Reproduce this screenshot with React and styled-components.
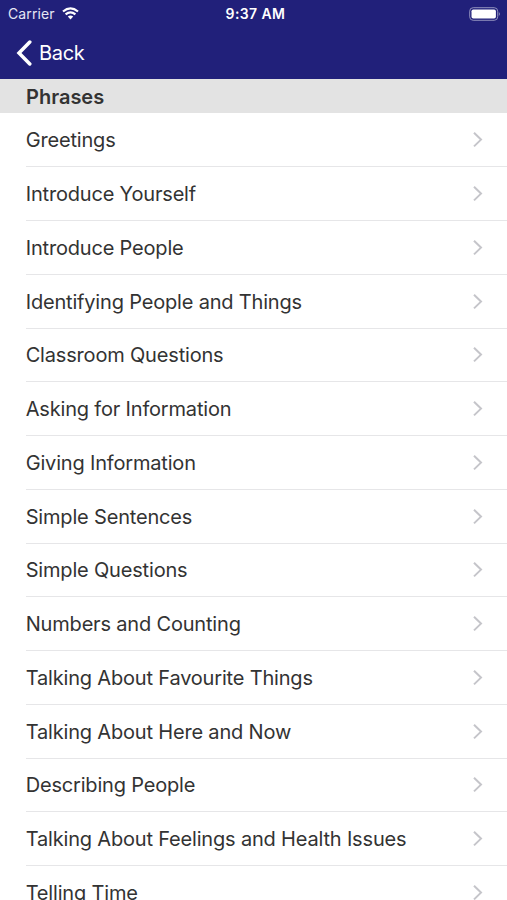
import React from 'react';
import styled, { createGlobalStyle } from 'styled-components';

const GlobalStyle = createGlobalStyle`
  * { box-sizing: border-box; }
  body { margin: 0; background: #fff; overflow: hidden; font-family: Inter, "Liberation Sans", sans-serif; }
`;
const Screen = styled.main`
  width: 100%;
  height: 900px;
  overflow: hidden;
  background: #fff;
`;
const Header = styled.header`
  height: 79px;
  background: #21207a;
  color: #fff;
`;
const StatusBar = styled.div`
  display: grid;
  grid-template-columns: 1fr auto 1fr;
  align-items: center;
  height: 27px;
  padding: 0 6px 0 8px;
  font-size: 14px;
  line-height: 27px;
`;
const Carrier = styled.div`
  display: flex;
  align-items: center;
  gap: 7px;
  color: #e6e6f4;
`;
const Label = styled.span`
  display: block;
  white-space: nowrap;
  letter-spacing: ${(p) => p.$track || 0}px;
  font-weight: ${(p) => p.$weight || 400};
`;
const Clock = styled(Label)`
  padding-left: 2px;
`;
const Battery = styled.svg`
  justify-self: end;
`;
const BackButton = styled.button`
  display: flex;
  align-items: center;
  gap: 6px;
  height: 52px;
  margin: 0;
  padding: 0 0 0 16px;
  border: 0;
  background: none;
  color: inherit;
  font: 400 20px/52px Inter, sans-serif;
`;
const SectionTitle = styled.h2`
  height: 34px;
  margin: 0;
  padding-left: 26px;
  background: #e3e3e3;
  color: #333;
  font-size: 20px;
  font-weight: 600;
  line-height: 36px;
`;
const List = styled.ul`
  margin: 0;
  padding: 0.5px 0 0 25.7px;
  list-style: none;
`;
const Row = styled.li`
  display: flex;
  align-items: center;
  justify-content: space-between;
  height: 53.75px;
  padding: 1px 24px 0 0;
  border-bottom: 1px solid #e6e6e8;
  color: #333;
  font-size: 20px;
`;

const phrases = [
  'Greetings', 'Introduce Yourself', 'Introduce People',
  'Identifying People and Things', 'Classroom Questions',
  'Asking for Information', 'Giving Information', 'Simple Sentences',
  'Simple Questions', 'Numbers and Counting',
  'Talking About Favourite Things', 'Talking About Here and Now',
  'Describing People', 'Talking About Feelings and Health Issues',
  'Telling Time',
];

export default function App() {
  return (
    <Screen>
      <GlobalStyle />
      <Header>
        <StatusBar>
          <Carrier>
            <Label $track={0.1}>Carrier</Label>
            <svg width="17" height="13" viewBox="0 0 17 13" fill="none" stroke="#fff" strokeWidth="2.2">
              <path d="M1 4.5Q8.5-1.8 16 4.5M3.6 7.4Q8.5 3.3 13.4 7.4" />
              <path d="M5.8 9.5Q8.5 7.4 11.2 9.5L8.5 12.4Z" fill="#fff" stroke="none" />
            </svg>
          </Carrier>
          <Clock $weight={600} $track={0.4}>9:37 AM</Clock>
          <Battery width="32" height="14" viewBox="0 0 32 14">
            <rect x="0.7" y="0.7" width="28" height="12.6" rx="3.5" fill="none" stroke="#9090bd" />
            <rect x="2.5" y="2.5" width="24.4" height="9" rx="1.8" fill="#fff" />
            <path d="M29.8 5Q32 7 29.8 9Z" fill="#9090bd" />
          </Battery>
        </StatusBar>
        <BackButton>
          <svg width="17" height="27" viewBox="0 0 17 27" fill="none" stroke="#fff" strokeWidth="3.5" strokeLinecap="round"><path d="M13.8 2L3 13L13.8 24" /></svg>
          <Label $track={-0.3}>Back</Label>
        </BackButton>
      </Header>
      <SectionTitle>Phrases</SectionTitle>
      <List>
        {phrases.map((name) => (
          <Row key={name}>
            <Label $track={-0.18}>{name}</Label>
            <svg width="11" height="16" viewBox="0 0 11 16" fill="none" stroke="#c5c5ca" strokeWidth="2"><path d="M2 0.8L9 7.6L2 14.4" /></svg>
          </Row>
        ))}
      </List>
    </Screen>
  );
}
